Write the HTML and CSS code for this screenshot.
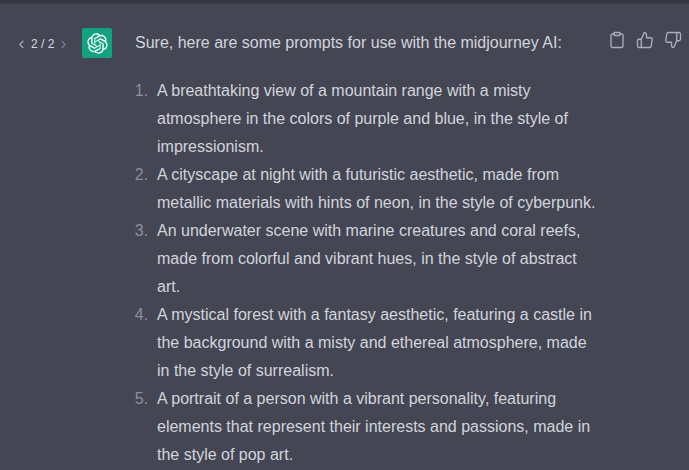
FILE: index.html
```html
<!DOCTYPE html>
<html>
<head>
<meta charset="utf-8">
<title>Chat</title>
<link rel="stylesheet" href="styles.css">
</head>
<body>
<div class="topline"></div>
<div class="message">
  <div class="pager">
    <svg class="chev" viewBox="0 0 8 12"><path d="M6 2 2 6l4 4"/></svg>
    <span class="count">2 / 2</span>
    <svg class="chev dim" viewBox="0 0 8 12"><path d="M2 2l4 4-4 4"/></svg>
  </div>
  <div class="avatar">
    <svg viewBox="0 0 41 41"><path fill="#fff" d="M37.5324 16.8707C37.9808 15.5241 38.1363 14.0974 37.9886 12.6859C37.8409 11.2744 37.3934 9.91076 36.676 8.68622C35.6126 6.83404 33.9882 5.3676 32.0373 4.4985C30.0864 3.62941 27.9098 3.40259 25.8215 3.85078C24.8796 2.7893 23.7219 1.94125 22.4257 1.36341C21.1295 0.785575 19.7249 0.491269 18.3058 0.500197C16.1708 0.495044 14.0893 1.16803 12.3614 2.42214C10.6335 3.67624 9.34853 5.44666 8.6917 7.47815C7.30085 7.76286 5.98686 8.3414 4.8377 9.17505C3.68854 10.0087 2.73073 11.0782 2.02839 12.312C0.956464 14.1591 0.498905 16.2988 0.721698 18.4228C0.944492 20.5467 1.83612 22.5449 3.268 24.1293C2.81966 25.4759 2.66413 26.9026 2.81182 28.3141C2.95951 29.7256 3.40701 31.0892 4.12437 32.3138C5.18791 34.1659 6.8123 35.6322 8.76321 36.5013C10.7141 37.3704 12.8907 37.5973 14.9789 37.1492C15.9208 38.2107 17.0786 39.0587 18.3747 39.6366C19.6709 40.2144 21.0755 40.5087 22.4946 40.4998C24.6307 40.5054 26.7133 39.8321 28.4418 38.5772C30.1704 37.3223 31.4556 35.5506 32.1119 33.5179C33.5027 33.2332 34.8167 32.6547 35.9659 31.821C37.115 30.9874 38.0728 29.9178 38.7752 28.684C39.8458 26.8371 40.3023 24.6979 40.0789 22.5748C39.8556 20.4517 38.9639 18.4544 37.5324 16.8707ZM22.4978 37.8849C20.7443 37.8874 19.0459 37.2733 17.6994 36.1501C17.7601 36.117 17.8666 36.0586 17.936 36.0161L25.9004 31.4156C26.1003 31.3019 26.2663 31.137 26.3813 30.9378C26.4964 30.7386 26.5563 30.5124 26.5549 30.2825V19.0542L29.9213 20.998C29.9389 21.0068 29.9541 21.0198 29.9656 21.0359C29.977 21.052 29.9842 21.0707 29.9867 21.0902V30.3889C29.9842 32.375 29.1946 34.2791 27.7909 35.6841C26.3872 37.0892 24.4838 37.8806 22.4978 37.8849ZM6.39227 31.0064C5.51397 29.4888 5.19742 27.7107 5.49804 25.9832C5.55718 26.0187 5.66048 26.0818 5.73461 26.1244L13.699 30.7248C13.8975 30.8408 14.1233 30.902 14.3532 30.902C14.583 30.902 14.8088 30.8408 15.0073 30.7248L24.731 25.1103V28.9979C24.7321 29.0177 24.7283 29.0376 24.7199 29.0556C24.7115 29.0736 24.6988 29.0893 24.6829 29.1012L16.6317 33.7497C14.9096 34.7416 12.8643 35.0097 10.9447 34.4954C9.02506 33.9811 7.38785 32.7263 6.39227 31.0064ZM4.29707 13.6194C5.17156 12.0998 6.55279 10.9364 8.19885 10.3327C8.19885 10.4013 8.19491 10.5228 8.19491 10.6071V19.808C8.19351 20.0378 8.25334 20.2638 8.36823 20.4629C8.48312 20.6619 8.64893 20.8267 8.84863 20.9404L18.5723 26.5542L15.206 28.4979C15.1894 28.5089 15.1703 28.5155 15.1505 28.5173C15.1307 28.5191 15.1107 28.516 15.0924 28.5082L7.04046 23.8557C5.32135 22.8601 4.06716 21.2235 3.55289 19.3046C3.03862 17.3858 3.30624 15.3413 4.29707 13.6194ZM31.955 20.0556L22.2312 14.4411L25.5976 12.4981C25.6142 12.4872 25.6333 12.4805 25.6531 12.4787C25.6729 12.4769 25.6928 12.4801 25.7111 12.4879L33.7631 17.1364C34.9967 17.849 36.0017 18.8982 36.6606 20.1613C37.3194 21.4244 37.6047 22.849 37.4832 24.2684C37.3617 25.6878 36.8382 27.0432 35.9743 28.1759C35.1103 29.3086 33.9415 30.1717 32.6047 30.6641C32.6047 30.5947 32.6047 30.4733 32.6047 30.3889V21.188C32.6066 20.9586 32.5474 20.7328 32.4332 20.5338C32.319 20.3348 32.154 20.1698 31.955 20.0556ZM35.3055 15.0128C35.2464 14.9765 35.1431 14.9142 35.069 14.8717L27.1045 10.2712C26.906 10.1554 26.6803 10.0943 26.4504 10.0943C26.2206 10.0943 25.9948 10.1554 25.7963 10.2712L16.0726 15.8858V11.9982C16.0715 11.9783 16.0753 11.9585 16.0837 11.9405C16.0921 11.9225 16.1048 11.9068 16.1207 11.8949L24.1719 7.25025C25.4053 6.53903 26.8158 6.19376 28.2383 6.25482C29.6608 6.31589 31.0364 6.78077 32.2044 7.59508C33.3723 8.40939 34.2842 9.53945 34.8334 10.8531C35.3826 12.1667 35.5464 13.6095 35.3055 15.0128ZM14.2424 21.9419L10.8752 19.9981C10.8576 19.9893 10.8423 19.9763 10.8309 19.9602C10.8195 19.9441 10.8122 19.9254 10.8098 19.9058V10.6071C10.8107 9.18295 11.2173 7.78848 11.9819 6.58696C12.7466 5.38544 13.8377 4.42659 15.1275 3.82264C16.4173 3.21869 17.8524 2.99464 19.2649 3.1767C20.6775 3.35876 22.0089 3.93941 23.1034 4.85067C23.0427 4.88379 22.937 4.94215 22.8668 4.98473L14.9024 9.58517C14.7025 9.69878 14.5366 9.86356 14.4215 10.0626C14.3065 10.2616 14.2466 10.4877 14.2479 10.7175L14.2424 21.9419ZM16.071 17.9991L20.4018 15.4978L24.7325 17.9975V22.9985L20.4018 25.4983L16.071 22.9985V17.9991Z"/></svg>
  </div>
  <div class="content">
    <p class="intro">Sure, here are some prompts for use with the midjourney AI:</p>
    <ol class="prompts">
      <li>A breathtaking view of a mountain range with a misty<br>atmosphere in the colors of purple and blue, in the style of<br>impressionism.</li>
      <li>A cityscape at night with a futuristic aesthetic, made from<br>metallic materials with hints of neon, in the style of cyberpunk.</li>
      <li>An underwater scene with marine creatures and coral reefs,<br>made from colorful and vibrant hues, in the style of abstract<br>art.</li>
      <li>A mystical forest with a fantasy aesthetic, featuring a castle in<br>the background with a misty and ethereal atmosphere, made<br>in the style of surrealism.</li>
      <li>A portrait of a person with a vibrant personality, featuring<br>elements that represent their interests and passions, made in<br>the style of pop art.</li>
    </ol>
  </div>
  <div class="actions">
    <svg viewBox="0 0 24 24"><path d="M16 4h2a2 2 0 0 1 2 2v14a2 2 0 0 1-2 2H6a2 2 0 0 1-2-2V6a2 2 0 0 1 2-2h2"/><rect x="8" y="2" width="8" height="4" rx="1"/></svg>
    <svg viewBox="0 0 24 24"><path d="M14 9V5a3 3 0 0 0-3-3l-4 9v11h11.28a2 2 0 0 0 2-1.7l1.38-9a2 2 0 0 0-2-2.3zM7 22H4a2 2 0 0 1-2-2v-7a2 2 0 0 1 2-2h3"/></svg>
    <svg viewBox="0 0 24 24"><path d="M10 15v4a3 3 0 0 0 3 3l4-9V2H5.72a2 2 0 0 0-2 1.7l-1.38 9a2 2 0 0 0 2 2.3zm7-13h2.67A2.31 2.31 0 0 1 22 4v7a2.31 2.31 0 0 1-2.33 2H17"/></svg>
  </div>
</div>
</body>
</html>
```

FILE: styles.css
```css
html, body {
  margin: 0;
  height: 100%;
  overflow: hidden;
}

body {
  background: #444654;
  color: #d1d5db;
  font-family: "Liberation Sans", Arial, sans-serif;
  font-size: 16px;
  line-height: 28px;
}

.topline {
  height: 3px;
  background: #343541;
  border-bottom: 1px solid #3b3c48;
}

.message {
  display: flex;
  align-items: flex-start;
  padding-top: 25px;
}

.pager {
  display: flex;
  align-items: center;
  gap: 6px;
  width: 82px;
  padding-left: 18px;
  box-sizing: border-box;
  height: 30px;
  color: #d9d9e3;
  font-size: 12px;
}

.count {
  white-space: nowrap;
}

.chev {
  width: 7px;
  height: 11px;
  fill: none;
  stroke: #acacbe;
  stroke-width: 1.3;
}

.chev.dim {
  stroke: #7c7d8a;
}

.avatar {
  display: flex;
  align-items: center;
  justify-content: center;
  width: 30px;
  height: 30px;
  margin-top: -1px;
  background: #10a37f;
  border-radius: 2px;
  flex: none;
}

.avatar svg {
  width: 21px;
  height: 21px;
}

.content {
  width: 470px;
  margin-left: 23px;
  flex: none;
}

.intro {
  margin: 0 0 20px;
  white-space: nowrap;
}

.prompts {
  margin: 0;
  padding: 0 0 0 22px;
  white-space: nowrap;
}

.prompts li::marker {
  content: counter(list-item) ".  ";
  color: #8e8ea0;
}

.actions {
  display: flex;
  gap: 10px;
  margin-left: 3px;
  padding-top: 2px;
}

.actions svg {
  width: 18px;
  height: 18px;
  fill: none;
  stroke: #acacbe;
  stroke-width: 1.8;
  stroke-linecap: round;
  stroke-linejoin: round;
}
```
